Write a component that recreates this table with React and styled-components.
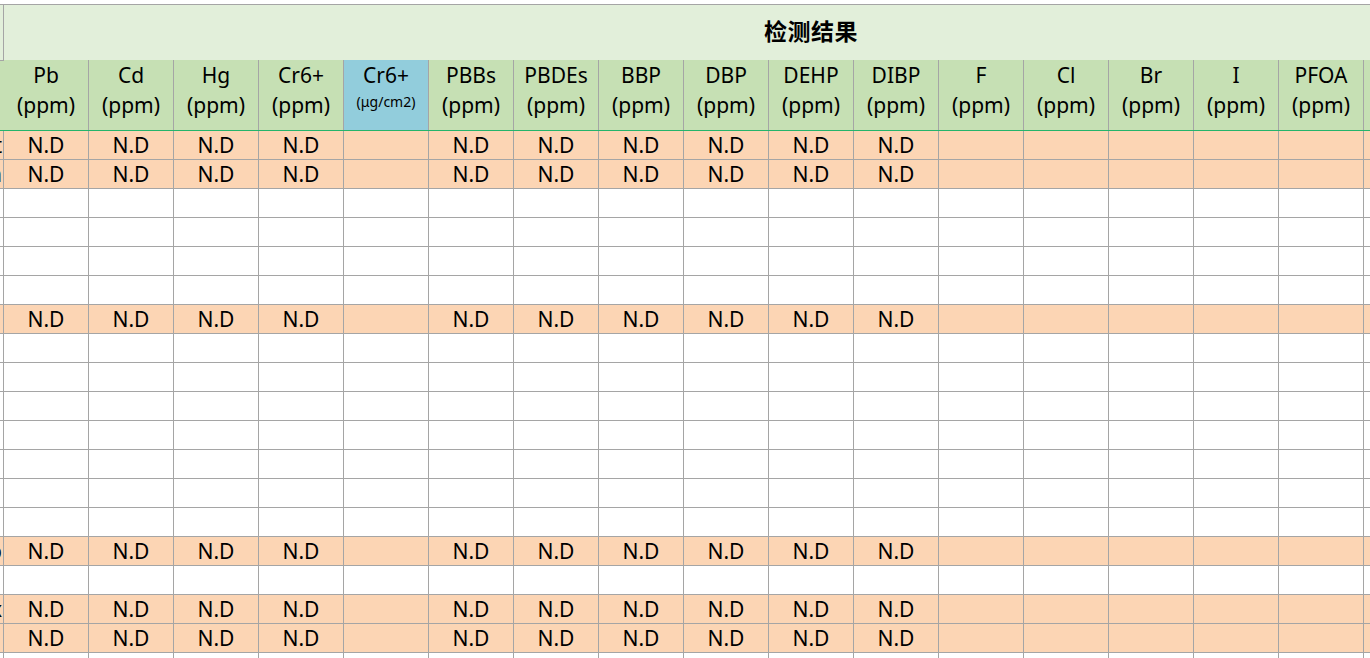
import React from 'react';
import styled, { createGlobalStyle } from 'styled-components';

const GRID = '#a5a5a5';
const COLS = 19;

const GlobalStyle = createGlobalStyle`
  html, body {
    margin: 0;
    padding: 0;
    background: #ffffff;
  }
  body {
    font-family: "Noto Sans", "Noto Sans CJK SC", sans-serif;
    color: #000;
  }
`;

const Viewport = styled.div`
  width: 100vw;
  height: 100vh;
  overflow: hidden;
  background: #ffffff;
`;

const Sheet = styled.div`
  width: ${3 + COLS * 85}px;
  margin-top: 4px;
  border-top: 1px solid ${GRID};
`;

const TitleRow = styled.div`
  display: grid;
  grid-template-columns: 3px 1fr;
  column-gap: 1px;
  height: 55px;
  background: ${GRID};
  border-bottom: 1px solid ${GRID};
`;

const TitleCell = styled.div`
  background: #e2efda;
  display: flex;
  align-items: center;
  justify-content: center;
  padding-bottom: 5px;
  font-family: "Noto Sans CJK SC", sans-serif;
  font-weight: 700;
  font-size: 23px;
  letter-spacing: 0.5px;
`;

const HeaderRow = styled.div`
  display: grid;
  grid-template-columns: 3px repeat(${COLS}, 84px);
  column-gap: 1px;
  height: 69px;
  background: ${GRID};
  border-bottom: 1px solid #25b46b;
`;

const HeadCell = styled.div`
  background: ${(p) => (p.$tone === 'blue' ? '#92cddc' : '#c6e0b4')};
  display: flex;
  flex-direction: column;
  align-items: center;
  font-size: 21px;
  line-height: 30px;
  margin-top: -1px;
  ${(p) => p.$lead && 'margin-right: -1px; margin-top: 0;'}
`;

const Unit = styled.span`
  font-size: ${(p) => (p.$small ? '14px' : '21px')};
  line-height: ${(p) => (p.$small ? '24px' : '30px')};
`;

const DataRow = styled.div`
  display: grid;
  grid-template-columns: 3px repeat(${COLS}, 84px);
  column-gap: 1px;
  height: 28px;
  background: ${GRID};
  border-bottom: 1px solid ${GRID};
`;

const Cell = styled.div`
  background: ${(p) => (p.$peach ? '#fcd5b4' : '#ffffff')};
  display: flex;
  align-items: center;
  justify-content: center;
  font-size: 21px;
  line-height: 28px;
  overflow: hidden;
  white-space: nowrap;
`;

const LeadCell = styled(Cell)`
  justify-content: flex-end;
  padding-right: 1px;
`;

const headers = [
  { name: 'Pb', unit: '(ppm)' },
  { name: 'Cd', unit: '(ppm)' },
  { name: 'Hg', unit: '(ppm)' },
  { name: 'Cr6+', unit: '(ppm)' },
  { name: 'Cr6+', unit: '(μg/cm2)', tone: 'blue', small: true },
  { name: 'PBBs', unit: '(ppm)' },
  { name: 'PBDEs', unit: '(ppm)' },
  { name: 'BBP', unit: '(ppm)' },
  { name: 'DBP', unit: '(ppm)' },
  { name: 'DEHP', unit: '(ppm)' },
  { name: 'DIBP', unit: '(ppm)' },
  { name: 'F', unit: '(ppm)' },
  { name: 'Cl', unit: '(ppm)' },
  { name: 'Br', unit: '(ppm)' },
  { name: 'I', unit: '(ppm)' },
  { name: 'PFOA', unit: '(ppm)' },
  { name: '', unit: '' },
  { name: '', unit: '' },
  { name: '', unit: '' },
];

// columns (0-based, header index) that hold a result
const resultCols = [0, 1, 2, 3, 5, 6, 7, 8, 9, 10];

// peach rows carry results; tail = last letter of the cut-off column on the left
const rows = [
  { peach: true, tail: 't' },
  { peach: true, tail: 'n' },
  {}, {}, {}, {},
  { peach: true },
  {}, {}, {}, {}, {}, {}, {},
  { peach: true, tail: 'b' },
  {},
  { peach: true, tail: 'x' },
  { peach: true },
  {},
];

export default function App() {
  return (
    <Viewport>
      <GlobalStyle />
      <Sheet>
        <TitleRow>
          <TitleCell />
          <TitleCell>检测结果</TitleCell>
        </TitleRow>
        <HeaderRow>
          <HeadCell $lead />
          {headers.map((h, i) => (
            <HeadCell key={i} $tone={h.tone}>
              <span>{h.name}</span>
              <Unit $small={h.small}>{h.unit}</Unit>
            </HeadCell>
          ))}
        </HeaderRow>
        {rows.map((r, ri) => (
          <DataRow key={ri}>
            <LeadCell $peach={r.peach}>{r.tail || ''}</LeadCell>
            {headers.map((h, ci) => (
              <Cell key={ci} $peach={r.peach}>
                {r.peach && resultCols.includes(ci) ? 'N.D' : ''}
              </Cell>
            ))}
          </DataRow>
        ))}
      </Sheet>
    </Viewport>
  );
}
